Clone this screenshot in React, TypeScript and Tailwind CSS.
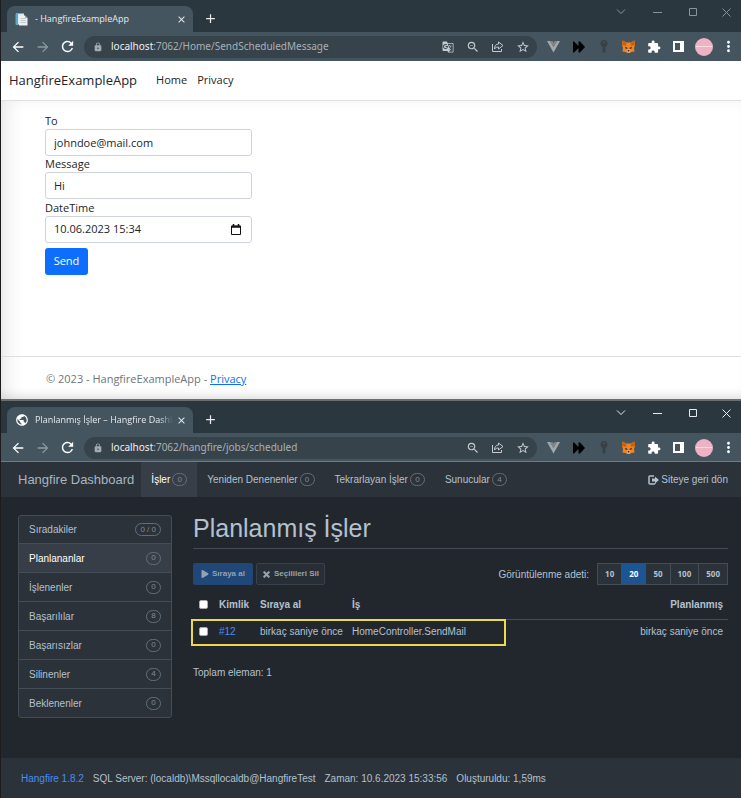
import type { ReactNode } from "react";
import {
  MdArrowBack, MdArrowForward, MdRefresh, MdLock, MdGTranslate, MdZoomOut, MdStarBorder,
  MdExtension, MdMoreVert, MdPublic, MdAdd, MdClose,
} from "react-icons/md";
import { FaPlay, FaTimes } from "react-icons/fa";

function ShareIcon() {
  return (
    <svg width="13" height="13" viewBox="0 0 26 26" fill="none" stroke="currentColor" strokeWidth="2" aria-hidden="true">
      <path d="M3 8v15h18v-5" />
      <path d="M15 4l9 7-9 7v-4c-4 0-6 1-8 4 0-6 3-10 8-10z" strokeLinejoin="round" />
    </svg>
  );
}

function VueIcon() {
  return (
    <svg width="13" height="13" viewBox="0 0 26 26" aria-hidden="true">
      <path d="M0 2h6l7 12 7-12h6L13 25z" fill="#a3a8ab" />
      <path d="M6 2h5l2 4 2-4h5l-7 12z" fill="#7f878c" />
    </svg>
  );
}

function ForwardIcon() {
  return (
    <svg width="12" height="12" viewBox="0 0 24 24" fill="#000" aria-hidden="true">
      <path d="M0 1l2 0 9 9V1h3l10 11-10 11h-3v-9l-9 9H0z" />
    </svg>
  );
}

function KeyIcon() {
  return (
    <svg width="8" height="13" viewBox="0 0 16 26" fill="#394046" aria-hidden="true">
      <path fillRule="evenodd" d="M8 0a7 7 0 0 1 3 13.300V24l-3 2-3-2V13.300A7 7 0 0 1 8 0zm0 2.500a2 2 0 1 0 0 4 2 2 0 0 0 0-4z" />
    </svg>
  );
}

function FoxIcon() {
  return (
    <svg width="13" height="13" viewBox="0 0 26 26" aria-hidden="true">
      <path d="M1 1l8 4h8l8-4 1 9-2 6 1 7-6 1-4 2H11l-4-2-6-1 1-7-2-6z" fill="#ee8420" />
      <path d="M1 1l8 5-1 6-8-2zM25 1l-8 5 1 6 8-2z" fill="#c8600f" />
      <path d="M6 14l4 1 1 3-4-1zM20 14l-4 1-1 3 4-1z" fill="#3a2a1c" />
      <path d="M9 20l2-1h4l2 1-2 5h-4z" fill="#d7c1b3" />
      <path d="M11 20h4l-1 3h-2z" fill="#20242a" />
    </svg>
  );
}

function PanelIcon() {
  return (
    <svg width="11" height="11" viewBox="0 0 11 11" aria-hidden="true">
      <path fillRule="evenodd" d="M0 0h11v11H0zM2 2v7h5V2z" fill="#fff" />
    </svg>
  );
}

function DocIcon() {
  return (
    <svg width="13" height="13" viewBox="0 0 26 26" aria-hidden="true">
      <path d="M2 1h16v22H2z" fill="#dbe8ee" />
      <path d="M1 2h5v21H1z" fill="#5aa9d2" />
      <path d="M8 5h12l5 5v15H8z" fill="#eef0f0" />
      <path d="M11 11h10M11 15h11M11 19h11" stroke="#b5bcc0" strokeWidth="1.500" />
      <path d="M20 5v5h5z" fill="#9aa5ab" />
    </svg>
  );
}

function CalendarIcon() {
  return (
    <svg width="10" height="11" viewBox="0 0 20 22" fill="none" stroke="#111" strokeWidth="2" aria-hidden="true">
      <path d="M1 4h18v17H1z" />
      <path d="M1 5.500h18" strokeWidth="4" />
      <path d="M5 0v4M15 0v4" strokeWidth="3" />
    </svg>
  );
}

function LogoutIcon() {
  return (
    <svg width="11" height="10" viewBox="0 0 22 20" aria-hidden="true">
      <path d="M12 2H4Q2 2 2 4v12q0 2 2 2h8q2 0 2-2" fill="none" stroke="currentColor" strokeWidth="3" />
      <path d="M14 3l8 7-8 7v-4H8V7h6z" fill="currentColor" />
    </svg>
  );
}

function IconButton({ label, className = "w-[25px]", children }: { label: string; className?: string; children: ReactNode }) {
  return (
    <button type="button" aria-label={label} className={`flex h-6 shrink-0 items-center justify-center ${className}`}>
      {children}
    </button>
  );
}

type ChromeProps = { icon: ReactNode; title: string; path: string; translate?: boolean; active?: boolean };

function BrowserChrome({ icon, title, path, translate = false, active = false }: ChromeProps) {
  return (
    <header className="bg-[#2b373e] font-['Noto_Sans','Open_Sans',sans-serif] text-[#e8eaed]">
      <div className="flex h-8 items-end pl-[6px]">
        <div className="flex h-[26px] w-[186px] shrink-0 items-center rounded-t-lg bg-[#44555f] pl-2 pr-1">
          <span className="flex w-5 shrink-0">{icon}</span>
          <span className={`flex-1 overflow-hidden whitespace-nowrap font-['Open_Sans',sans-serif] text-[9px] font-medium ${active ? "[mask-image:linear-gradient(to_right,black_90%,transparent)]" : ""}`}>
            {title}
          </span>
          <IconButton label="Close tab" className="w-4"><MdClose size={11} stroke="currentColor" /></IconButton>
        </div>
        <IconButton label="New tab" className="mb-[2px] ml-[5px] w-[25px]"><MdAdd size={15} stroke="currentColor" /></IconButton>
        <div className={`ml-auto flex self-start ${active ? "text-[#e8eaed]" : "text-[#89949a]"}`}>
          <IconButton label="Search tabs" className="w-9">
            <svg width="10" height="6" viewBox="0 0 10 6" fill="none" stroke="currentColor"><path d="M1 .5l4 4 4-4" /></svg>
          </IconButton>
          <IconButton label="Minimize" className="w-9">
            <svg width="9" height="1" viewBox="0 0 9 1" fill="currentColor"><path d="M0 0h9v1H0z" /></svg>
          </IconButton>
          <IconButton label="Maximize" className="w-9">
            <svg width="8" height="8" viewBox="0 0 8 8" fill="none" stroke="currentColor"><path d="M.5.5h7v7h-7z" /></svg>
          </IconButton>
          <IconButton label="Close" className="w-[30px]">
            <svg width="9" height="9" viewBox="0 0 9 9" fill="none" stroke="currentColor"><path d="M.5.5l8 8M8.500.5l-8 8" /></svg>
          </IconButton>
        </div>
      </div>
      <div className="flex h-[29px] items-center bg-[#44555f] pl-1">
        <IconButton label="Back"><MdArrowBack size={16} color="#fff" stroke="#fff" /></IconButton>
        <IconButton label="Forward"><MdArrowForward size={16} color="#8d999f" stroke="#8d999f" /></IconButton>
        <IconButton label="Reload"><MdRefresh size={17} color="#fff" stroke="#fff" /></IconButton>
        <div className="ml-1 flex h-[22px] min-w-0 flex-1 items-center rounded-full bg-[#36434b] pl-[9px] pr-[2px]">
          <MdLock size={10} color="#a3abb0" className="mr-2 shrink-0" />
          <span className="flex-1 truncate text-[10px] text-[#a9b1b6]">
            <span className="text-[#eef0f1]">localhost</span>{path}
          </span>
          <div className="flex text-[#c4cace]">
            {translate && <IconButton label="Translate"><MdGTranslate size={12} /></IconButton>}
            <IconButton label="Zoom"><MdZoomOut size={14} stroke="currentColor" /></IconButton>
            <IconButton label="Share"><ShareIcon /></IconButton>
            <IconButton label="Bookmark"><MdStarBorder size={14} stroke="currentColor" /></IconButton>
          </div>
        </div>
        <div className="ml-1 flex">
          <IconButton label="Vue devtools"><VueIcon /></IconButton>
          <IconButton label="Fast forward"><ForwardIcon /></IconButton>
          <IconButton label="Key manager"><KeyIcon /></IconButton>
          <IconButton label="Wallet"><FoxIcon /></IconButton>
          <IconButton label="Extensions"><MdExtension size={14} color="#fff" /></IconButton>
          <IconButton label="Side panel"><PanelIcon /></IconButton>
          <IconButton label="Profile">
            <span className="flex size-[18px] items-center justify-center rounded-full bg-[#edb3c4]">
              <span className="h-px w-4 bg-[#f8dbe3]" />
            </span>
          </IconButton>
          <IconButton label="Menu"><MdMoreVert size={17} color="#fff" /></IconButton>
        </div>
      </div>
    </header>
  );
}

const fieldClass = "h-[27px] w-full rounded-[3px] border border-[#ced4da] bg-white px-2 text-[11px] text-[#212529] outline-none";

function MailPage() {
  return (
    <div className="flex min-h-[338px] flex-col bg-white font-['Open_Sans','Noto_Sans',sans-serif] text-[11px] text-[#212529]">
      <nav className="flex h-10 items-center border-b border-[#dfe0e1] pl-2">
        <a href="#home" className="mr-[19px] text-[13px]">HangfireExampleApp</a>
        <a href="#home" className="mr-[10px]">Home</a>
        <a href="#privacy">Privacy</a>
      </nav>
      <div className="flex flex-1 flex-col shadow-[inset_12px_2px_20px_-9px_rgba(0,0,0,0.12),inset_0_-10px_10px_-6px_rgba(0,0,0,0.10)]">
        <form className="w-[251px] flex-1 pl-11 pt-[11px]">
          <label htmlFor="to" className="block h-[17px] leading-[17px]">To</label>
          <input id="to" type="text" defaultValue="johndoe@mail.com" className={fieldClass} />
          <label htmlFor="message" className="block h-4 leading-4">Message</label>
          <input id="message" type="text" defaultValue="Hi" className={fieldClass} />
          <label htmlFor="date" className="block h-[17px] leading-[17px]">DateTime</label>
          <div className="flex h-[27px] items-center rounded-[3px] border border-[#ced4da] bg-white px-2">
            <input id="date" type="text" defaultValue="10.06.2023 15:34" className="min-w-0 flex-1 bg-transparent outline-none" />
            <button type="button" aria-label="Pick a date" className="mr-[2px]"><CalendarIcon /></button>
          </div>
          <button type="submit" className="mt-[5px] h-[27px] w-[43px] rounded-[3px] bg-[#0d6efd] text-white">Send</button>
        </form>
        <footer className="flex h-[43px] items-center border-t border-[#dcdee0] pl-[45px] pt-[2px] text-[#6c757d]">
          <span>© 2023 - HangfireExampleApp - <a href="#privacy" className="text-[#0d6efd] underline">Privacy</a></span>
        </footer>
      </div>
    </div>
  );
}

function Badge({ children }: { children: ReactNode }) {
  return (
    <span className="inline-flex h-[13px] min-w-[15px] items-center justify-center rounded-full border border-[#656e78] px-1 text-[8px] font-normal leading-none text-[#818c98]">
      {children}
    </span>
  );
}

const topItems = [
  { label: "İşler", count: "0", active: true },
  { label: "Yeniden Denenenler", count: "0", active: false },
  { label: "Tekrarlayan İşler", count: "0", active: false },
  { label: "Sunucular", count: "4", active: false },
];

const sideItems = [
  { label: "Sıradakiler", count: "0 / 0", active: false },
  { label: "Planlananlar", count: "0", active: true },
  { label: "İşlenenler", count: "0", active: false },
  { label: "Başarılılar", count: "8", active: false },
  { label: "Başarısızlar", count: "0", active: false },
  { label: "Silinenler", count: "4", active: false },
  { label: "Beklenenler", count: "0", active: false },
];

const pageSizes = ["10", "20", "50", "100", "500"];
const checkClass = "block size-[9px] appearance-none rounded-[2px] border border-[#aaa] bg-white checked:bg-[#316dca]";

function Dashboard() {
  return (
    <div className="-mt-px flex flex-1 flex-col bg-[#22272e] font-['Liberation_Sans',Arial,sans-serif] text-[10px] text-[#b4c1ce]">
      <nav className="flex h-9 items-stretch border-t border-[#6a7d87] bg-[#2b323a] pl-[17px] pr-[13px]">
        <a href="#dashboard" className="mr-[7px] flex items-center text-[13px] text-[#a9b5c1]">Hangfire Dashboard</a>
        {topItems.map((item) => (
          <a key={item.label} href="#jobs" className={`flex items-center gap-[2px] px-[10px] ${item.active ? "bg-[#373e47] text-white" : ""}`}>
            {item.label}<Badge>{item.count}</Badge>
          </a>
        ))}
        <a href="#site" className="ml-auto flex items-center gap-[2px]"><LogoutIcon />Siteye geri dön</a>
      </nav>
      <div className="flex flex-1 items-start gap-[21px] pl-[17px] pr-[13px] pt-[18px]">
        <aside className="w-[154px] shrink-0 divide-y divide-[#444c56] rounded-[3px] border border-[#444c56] bg-[#2b323a]">
          {sideItems.map((item) => (
            <a key={item.label} href="#list" className={`flex h-[29px] items-center justify-between px-[10px] first:h-7 last:h-7 ${item.active ? "bg-[#373e47] text-white" : ""}`}>
              {item.label}<Badge>{item.count}</Badge>
            </a>
          ))}
        </aside>
        <main className="min-w-0 flex-1">
          <h1 className="h-[34px] border-b border-[#444c56] text-[25px] leading-[26px]">Planlanmış İşler</h1>
          <div className="mt-[14px] flex items-center gap-[3px] text-[8px] font-bold">
            <button type="button" className="flex h-[22px] w-[60px] items-center justify-center gap-[3px] rounded-[2px] bg-[#214678] text-[#8fa1b8]">
              <FaPlay size={8} />Sıraya al
            </button>
            <button type="button" className="flex h-[22px] w-[69px] items-center justify-center gap-[3px] rounded-[2px] border border-[#3a414a] bg-[#282e36] text-[#9aa4af]">
              <FaTimes size={9} stroke="currentColor" strokeWidth={40} />Seçilileri Sil
            </button>
            <span className="ml-auto mr-[5px] text-[10px] font-normal">Görüntülenme adeti:</span>
            <div className="flex h-[22px] divide-x divide-[#444c56] border border-[#444c56] bg-[#2b323a] font-['Open_Sans',sans-serif]">
              {pageSizes.map((size) => (
                <button key={size} type="button" className={`px-[7px] ${size === "20" ? "bg-[#1d5493] text-white" : ""}`}>{size}</button>
              ))}
            </div>
          </div>
          <div className="relative mt-[6px]">
            <table className="w-full border-collapse text-left">
              <thead>
                <tr className="h-7 border-b border-[#444c56]">
                  <th className="w-[26px] pl-[6px]"><input type="checkbox" aria-label="Select all jobs" className={checkClass} /></th>
                  <th className="w-[41px]">Kimlik</th>
                  <th className="w-[92px]">Sıraya al</th>
                  <th>İş</th>
                  <th className="pr-[5px] text-right">Planlanmış</th>
                </tr>
              </thead>
              <tbody>
                <tr className="h-6">
                  <td className="pl-[6px]"><input type="checkbox" aria-label="Select job 12" className={checkClass} /></td>
                  <td><a href="#12" className="text-[#4a8df0]">#12</a></td>
                  <td className="whitespace-nowrap">birkaç saniye önce</td>
                  <td>HomeController.SendMail</td>
                  <td className="pr-[5px] text-right">birkaç saniye önce</td>
                </tr>
              </tbody>
            </table>
            <div className="pointer-events-none absolute -left-[2px] top-7 h-[27px] w-[315px] border-2 border-[#e9d94f]" />
          </div>
          <p className="mt-[22px] leading-4">Toplam eleman: 1</p>
        </main>
      </div>
      <footer className="flex h-10 items-center gap-[9px] bg-[#2b323a] pl-5">
        <a href="#version" className="text-[#4a8df0]">Hangfire 1.8.2</a>
        <span>SQL Server: (localdb)\Mssqllocaldb@HangfireTest</span>
        <span>Zaman: 10.6.2023 15:33:56</span>
        <span>Oluşturuldu: 1,59ms</span>
      </footer>
    </div>
  );
}

export default function App() {
  return (
    <div className="flex min-h-screen flex-col border-l border-[#1c1c1e] bg-[#22272e]">
      <section>
        <BrowserChrome icon={<DocIcon />} title="- HangfireExampleApp" path=":7062/Home/SendScheduledMessage" translate />
        <MailPage />
      </section>
      <section className="flex flex-1 flex-col border-t-2 border-[#6b6d6e]">
        <BrowserChrome icon={<MdPublic size={14} color="#fff" />} title="Planlanmış İşler – Hangfire Dashb" path=":7062/hangfire/jobs/scheduled" active />
        <Dashboard />
      </section>
    </div>
  );
}
